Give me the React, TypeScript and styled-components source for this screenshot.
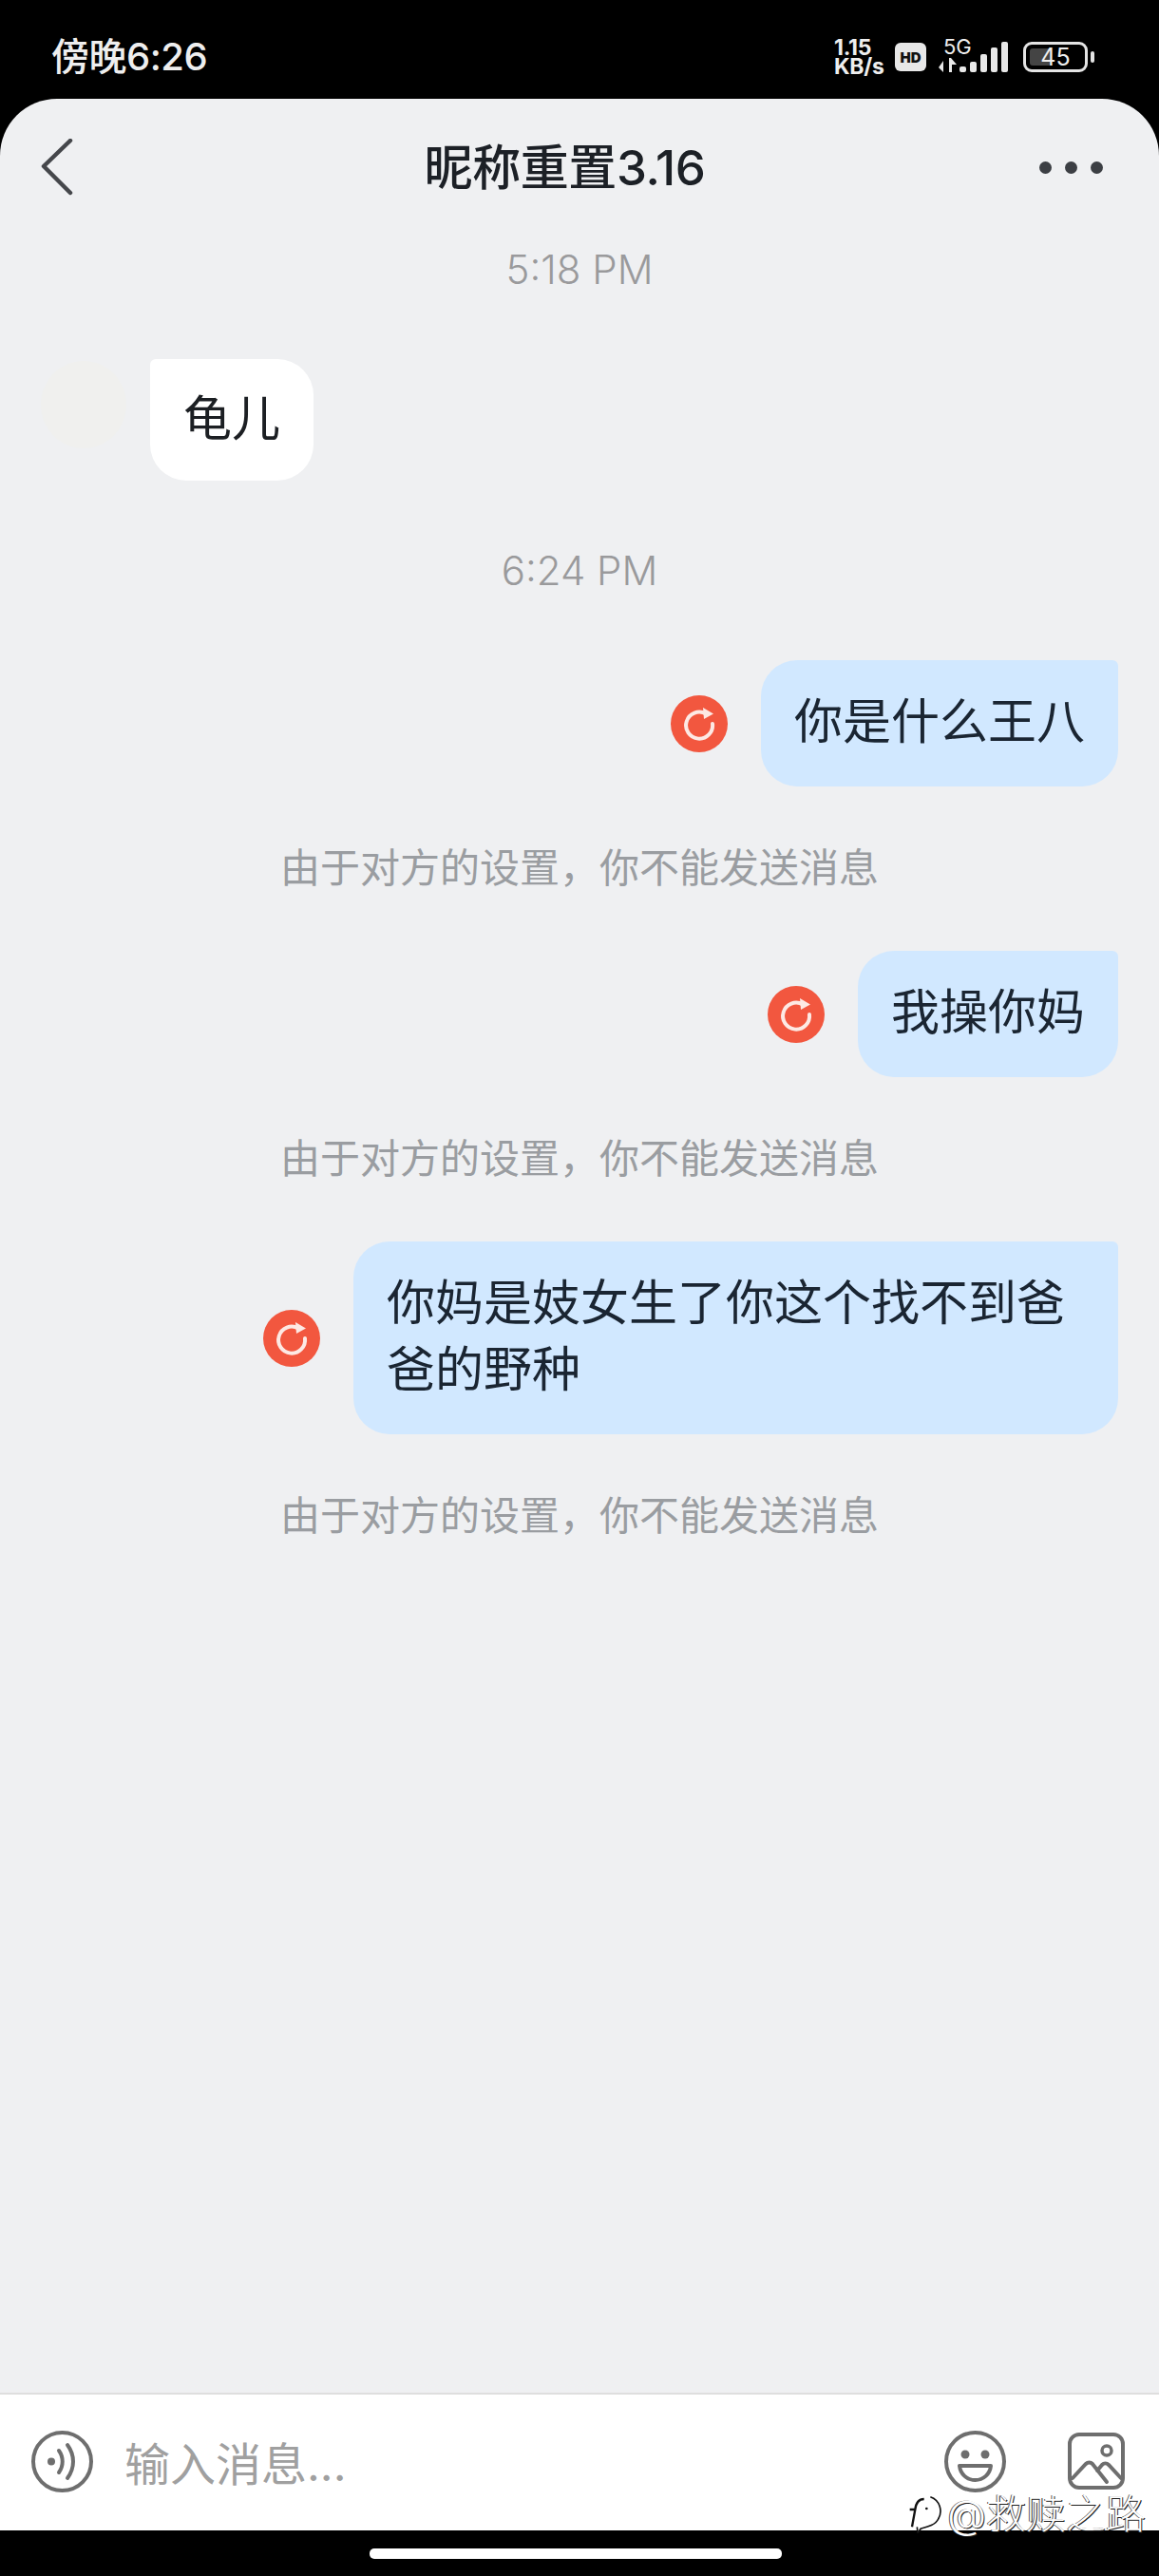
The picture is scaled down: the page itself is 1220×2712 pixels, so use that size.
import React from "react";
import styled, { createGlobalStyle } from "styled-components";

const CJK = `Inter, "Noto Sans CJK SC", sans-serif`;

const GlobalStyle = createGlobalStyle`
  html, body {
    margin: 0;
    padding: 0;
    background: #000;
  }
  * {
    box-sizing: border-box;
  }
`;

const Page = styled.div`
  position: relative;
  width: 1220px;
  height: 2712px;
  background: #000;
  display: flex;
  flex-direction: column;
  font-family: ${CJK};
  overflow: hidden;
`;

// status bar
const StatusBar = styled.div`
  height: 104px;
  padding: 16px 68px 0 54px;
  display: flex;
  align-items: center;
  justify-content: space-between;
  color: #eeeeee;
`;

const Clock = styled.span`
  font-size: 40px;
  font-weight: 500;
  letter-spacing: -0.5px;
  margin-top: -6px;
`;

const StatusIcons = styled.div`
  display: flex;
  align-items: center;
`;

const NetSpeed = styled.div`
  width: 56px;
  display: flex;
  flex-direction: column;
  font-family: Inter, sans-serif;
  font-size: 23px;
  font-weight: 700;
  line-height: 20px;
  letter-spacing: -0.2px;
  margin-right: 8px;
`;

const HdBadge = styled.span`
  width: 33px;
  height: 30px;
  background: #e8e8e8;
  border-radius: 6px;
  color: #111;
  font-family: Inter, sans-serif;
  font-size: 15px;
  font-weight: 900;
  display: flex;
  align-items: center;
  justify-content: center;
  margin-right: 13px;
`;

const Signal = styled.div`
  position: relative;
  width: 73px;
  height: 36px;
  margin-right: 16px;
`;

const FiveG = styled.span`
  position: absolute;
  left: 5px;
  top: -5px;
  font-family: Inter, sans-serif;
  font-size: 22px;
  font-weight: 400;
  line-height: 24px;
`;

const Battery = styled.div`
  position: relative;
  width: 68px;
  height: 32px;
  border: 3px solid #e4e4e4;
  border-radius: 9px;
  display: flex;
  align-items: center;
  justify-content: center;
  font-family: Inter, sans-serif;
  font-size: 25px;
  line-height: 1;
  margin-right: 3px;

  &::before {
    content: "";
    position: absolute;
    left: 4px;
    top: 4px;
    bottom: 4px;
    width: 23px;
    border-radius: 3px;
    background: #444;
  }
`;

const BatteryLevel = styled.span`
  position: relative;
`;

const BatteryTip = styled.span`
  width: 4px;
  height: 12px;
  border-radius: 2px;
  background: #e4e4e4;
`;

// chat sheet
const Sheet = styled.div`
  flex: 1;
  display: flex;
  flex-direction: column;
  background: #eff0f2;
  border-radius: 60px 60px 0 0;
`;

const NavBar = styled.header`
  height: 144px;
  flex-shrink: 0;
  padding: 0 59px 0 43px;
  display: flex;
  align-items: center;
  justify-content: space-between;
`;

const BackSlot = styled.div`
  width: 52px;
  display: flex;
`;

const Title = styled.h1`
  margin: -6px 0 0;
  font-size: 51px;
  font-weight: 500;
  letter-spacing: -0.4px;
  color: #1c2026;
`;

const MoreDots = styled.div`
  display: flex;
  gap: 14px;
`;

const Dot = styled.span`
  width: 13px;
  height: 13px;
  border-radius: 50%;
  background: #3c3f44;
`;

const MessageList = styled.main`
  flex: 1;
  padding: 8px 43px 0;
  display: flex;
  flex-direction: column;
`;

const TimeLabel = styled.div`
  text-align: center;
  font-size: 42px;
  line-height: 56px;
  font-weight: 300;
  color: #9a9a9c;
  margin-bottom: 66px;
`;

const IncomingRow = styled.div`
  display: flex;
  align-items: flex-start;
  gap: 25px;
  margin-bottom: 67px;
`;

const Avatar = styled.div`
  width: 90px;
  height: 92px;
  margin-top: 2px;
  border-radius: 50%;
  background: #f0f0ee;
`;

const OutgoingRow = styled.div`
  display: flex;
  align-items: center;
  justify-content: flex-end;
  gap: 35px;
  margin-bottom: 58px;
`;

const Bubble = styled.div<{ $mine?: boolean; $width?: number }>`
  width: ${({ $width }) => ($width ? `${$width}px` : "auto")};
  padding: ${({ $mine }) => ($mine ? "30px 35px 33px" : "28px 35px 30px")};
  font-size: 51px;
  line-height: 70px;
  background: ${({ $mine }) => ($mine ? "#d1e8ff" : "#ffffff")};
  color: ${({ $mine }) => ($mine ? "#1a2532" : "#1c1f23")};
  border-radius: ${({ $mine }) => ($mine ? "38px 6px 38px 38px" : "6px 38px 38px 38px")};
`;

const Notice = styled.div`
  text-align: center;
  font-size: 42px;
  line-height: 56px;
  color: #9a9da1;
  margin-bottom: 59px;
`;

const RetryIcon = styled.svg`
  width: 60px;
  height: 60px;
  flex-shrink: 0;
`;

const InputBar = styled.footer`
  height: 145px;
  flex-shrink: 0;
  background: #fff;
  border-top: 2px solid #dedede;
  padding: 0 36px 3px 33px;
  display: flex;
  align-items: center;
`;

const Placeholder = styled.div`
  flex: 1;
  margin-left: 33px;
  font-size: 48px;
  color: #a0a0a0;
`;

const InputIcon = styled.svg<{ $gap?: number }>`
  flex-shrink: 0;
  margin-left: ${({ $gap }) => $gap ?? 0}px;
`;

const HomeArea = styled.div`
  height: 48px;
  flex-shrink: 0;
  display: flex;
  justify-content: center;
  padding: 19px 8px 0 0;
`;

const HomeIndicator = styled.span`
  width: 434px;
  height: 11px;
  border-radius: 5px;
  background: #fff;
`;

// watermark baked into the screenshot
const Watermark = styled.div`
  position: absolute;
  right: 14px;
  bottom: 40px;
  display: flex;
  align-items: center;
  gap: 6px;
  font-size: 42px;
  line-height: 50px;
  font-weight: 300;
  color: #fff;
  text-shadow: 1px 1px 0 #222, -1px 0 0 #555;
`;

const Retry = () => (
  <RetryIcon viewBox="0 0 60 60">
    <circle cx="30" cy="30" r="30" fill="#f2573f" />
    <path
      d="M37 19.5 A14 14 0 1 0 44 30"
      fill="none"
      stroke="#fde9e4"
      strokeWidth="4"
      strokeLinecap="round"
    />
    <path d="M34 13 L45 19.5 L35 25 Z" fill="#fde9e4" />
  </RetryIcon>
);

const NOTICE = "由于对方的设置，你不能发送消息";

const App = () => {
  return (
    <Page>
      <GlobalStyle />
      <StatusBar>
        <Clock>傍晚6:26</Clock>
        <StatusIcons>
          <NetSpeed>
            <span>1.15</span>
            <span>KB/s</span>
          </NetSpeed>
          <HdBadge>HD</HdBadge>
          <Signal>
            <FiveG>5G</FiveG>
            <svg width="73" height="36" viewBox="0 0 73 36">
              <path d="M6 22 v12 M0 29 L5 22 L5 34 Z" fill="#e8e8e8" />
              <path d="M13 19 L19 26 L14 26 L14 34 L11 34 L11 19 Z" fill="#e8e8e8" />
              <rect x="22" y="28" width="7" height="6" rx="2" fill="#e8e8e8" />
              <rect x="33" y="23" width="7" height="11" rx="2" fill="#e8e8e8" />
              <rect x="44" y="15" width="7" height="19" rx="2" fill="#e8e8e8" />
              <rect x="55" y="8" width="7" height="26" rx="2" fill="#e8e8e8" />
              <rect x="66" y="2" width="7" height="32" rx="2" fill="#e8e8e8" />
            </svg>
          </Signal>
          <Battery>
            <BatteryLevel>45</BatteryLevel>
          </Battery>
          <BatteryTip />
        </StatusIcons>
      </StatusBar>

      <Sheet>
        <NavBar>
          <BackSlot>
            <svg width="34" height="60" viewBox="0 0 34 60">
              <path
                d="M31 2 L3 29 L31 57"
                fill="none"
                stroke="#45474b"
                strokeWidth="4.5"
                strokeLinecap="round"
                strokeLinejoin="round"
              />
            </svg>
          </BackSlot>
          <Title>昵称重置3.16</Title>
          <MoreDots>
            <Dot />
            <Dot />
            <Dot />
          </MoreDots>
        </NavBar>

        <MessageList>
          <TimeLabel>5:18 PM</TimeLabel>
          <IncomingRow>
            <Avatar />
            <Bubble>龟儿</Bubble>
          </IncomingRow>
          <TimeLabel>6:24 PM</TimeLabel>
          <OutgoingRow>
            <Retry />
            <Bubble $mine>你是什么王八</Bubble>
          </OutgoingRow>
          <Notice>{NOTICE}</Notice>
          <OutgoingRow>
            <Retry />
            <Bubble $mine>我操你妈</Bubble>
          </OutgoingRow>
          <Notice>{NOTICE}</Notice>
          <OutgoingRow>
            <Retry />
            <Bubble $mine $width={805}>
              你妈是妓女生了你这个找不到爸爸的野种
            </Bubble>
          </OutgoingRow>
          <Notice>{NOTICE}</Notice>
        </MessageList>

        <InputBar>
          <InputIcon width="65" height="65" viewBox="0 0 65 65">
            <circle cx="32.5" cy="32.5" r="30.5" fill="none" stroke="#6e6e6e" strokeWidth="4" />
            <circle cx="21" cy="32.5" r="4" fill="#6e6e6e" />
            <path
              d="M29 21 C34 28 34 37 29 44 M38 15 C46 26 46 39 38 50"
              fill="none"
              stroke="#6e6e6e"
              strokeWidth="4"
              strokeLinecap="round"
            />
          </InputIcon>
          <Placeholder>输入消息...</Placeholder>
          <InputIcon width="65" height="65" viewBox="0 0 65 65">
            <circle cx="32.5" cy="32.5" r="30.5" fill="none" stroke="#6e6e6e" strokeWidth="4" />
            <circle cx="22" cy="25" r="4.5" fill="#6e6e6e" />
            <circle cx="43" cy="25" r="4.5" fill="#6e6e6e" />
            <path
              d="M16 37 H49 C48 46 41 52 32.5 52 C24 52 17 46 16 37 Z"
              fill="none"
              stroke="#6e6e6e"
              strokeWidth="4"
              strokeLinejoin="round"
            />
          </InputIcon>
          <InputIcon $gap={65} width="60" height="60" viewBox="0 0 60 60">
            <rect x="2" y="2" width="56" height="56" rx="10" fill="none" stroke="#6e6e6e" strokeWidth="4" />
            <circle cx="41" cy="19" r="5" fill="none" stroke="#6e6e6e" strokeWidth="3.5" />
            <path
              d="M5 48 L19 33 C21 31 24 31 26 33 L41 52 M31 40 L36 34 C38 32 41 32 43 34 L56 48"
              fill="none"
              stroke="#6e6e6e"
              strokeWidth="4"
              strokeLinecap="round"
            />
          </InputIcon>
        </InputBar>
      </Sheet>

      <HomeArea>
        <HomeIndicator />
      </HomeArea>

      <Watermark>
        <svg width="35" height="40" viewBox="0 0 105 120">
          <path
            d="M70 5 C100 15 110 50 95 75 C85 95 60 100 40 105 L30 120 L28 100"
            fill="#fff"
            stroke="#111"
            strokeWidth="5"
          />
          <path d="M5 45 H24 M50 12 C35 12 25 20 22 45 L12 100" fill="none" stroke="#111" strokeWidth="7" />
          <circle cx="58" cy="42" r="4" fill="#111" />
        </svg>
        <span>@救赎之路</span>
      </Watermark>
    </Page>
  );
};

export default App;
